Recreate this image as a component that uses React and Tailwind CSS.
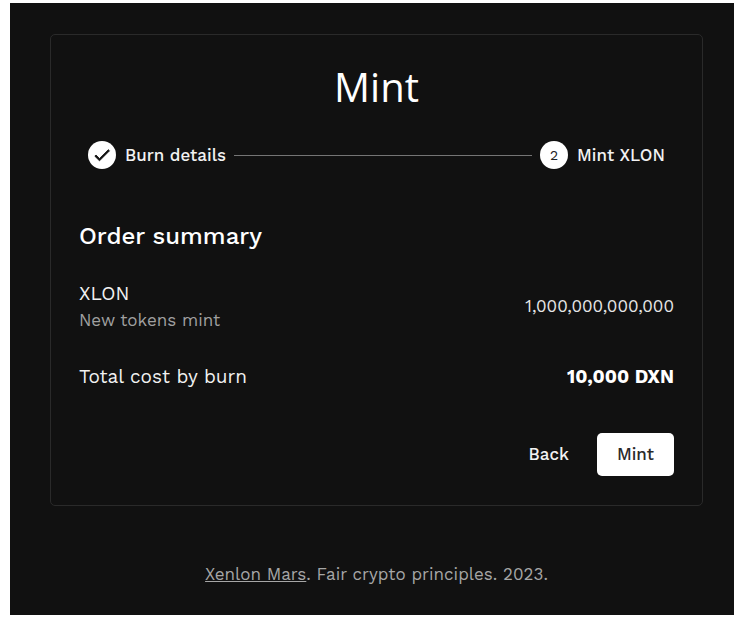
const steps = [
  { id: 1, label: "Burn details", done: true },
  { id: 2, label: "Mint XLON", done: false },
];

function StepIcon({ step }) {
  return (
    <span className="flex h-7 w-7 shrink-0 items-center justify-center rounded-full bg-white text-sm font-normal text-[#222222]">
      {step.done ? (
        <svg viewBox="0 0 24 24" className="h-5 w-5" fill="#111111" aria-label="Completed">
          <path
            d="M9 16.17 4.83 12l-1.42 1.41L9 19 21 7l-1.41-1.41z"
            stroke="#111111"
            strokeWidth="1"
            strokeLinejoin="round"
          />
        </svg>
      ) : (
        step.id
      )}
    </span>
  );
}

function Stepper() {
  return (
    <ol className="mt-[30px] flex items-center gap-2 px-[9px]">
      {steps.map((step, index) => (
        <li key={step.id} className={index > 0 ? "flex flex-1 items-center gap-2" : "flex items-center"}>
          {index > 0 && <span className="h-px flex-1 bg-[#757575]"></span>}
          <span className="flex items-center gap-[9px] text-[17px] leading-6 font-medium text-[#f2f2f2]">
            <StepIcon step={step} />
            {step.label}
          </span>
        </li>
      ))}
    </ol>
  );
}

function App() {
  return (
    <div className="bg-white pt-[3px] pr-[13px] pb-2 pl-2.5 font-['Work_Sans',Inter,sans-serif]">
      <div className="bg-[#111111] pt-[31px] pr-[31px] pb-7 pl-10">
        <main className="rounded-[5px] border border-[#2a2a2a] px-7 pt-7 pb-[29px]">
          <h1 className="text-center font-['Open_Sans',sans-serif] text-[40px] leading-[48px] text-white">Mint</h1>
          <Stepper />

          <h2 className="mt-[53px] text-2xl leading-7 font-medium text-white">Order summary</h2>

          <div className="mt-[30px] flex items-center justify-between">
            <div>
              <p className="text-[19px] leading-7 text-[#f2f2f2]">XLON</p>
              <p className="text-[17px] leading-6 text-[#a0a0a0]">New tokens mint</p>
            </div>
            <p className="text-[17px] leading-6 text-[#e6e6e6]">1,000,000,000,000</p>
          </div>

          <div className="mt-[33px] flex items-center justify-between">
            <p className="text-[19px] leading-6 text-[#f2f2f2]">Total cost by burn</p>
            <p className="text-[19px] leading-6 font-bold text-white">10,000 DXN</p>
          </div>

          <div className="mt-11 flex justify-end gap-2">
            <button type="button" className="px-5 text-[17px] font-medium text-[#f2f2f2]">
              Back
            </button>
            <button type="button" className="h-[43px] rounded-[5px] bg-white px-5 text-[17px] font-medium text-[#2a2a2a]">
              Mint
            </button>
          </div>
        </main>

        <footer className="mt-[55px] text-center text-[17px] leading-[26px] text-[#a6a6a6]">
          <a href="#" className="underline">Xenlon Mars</a>. Fair crypto principles. 2023.
        </footer>
      </div>
    </div>
  );
}

export default App;
